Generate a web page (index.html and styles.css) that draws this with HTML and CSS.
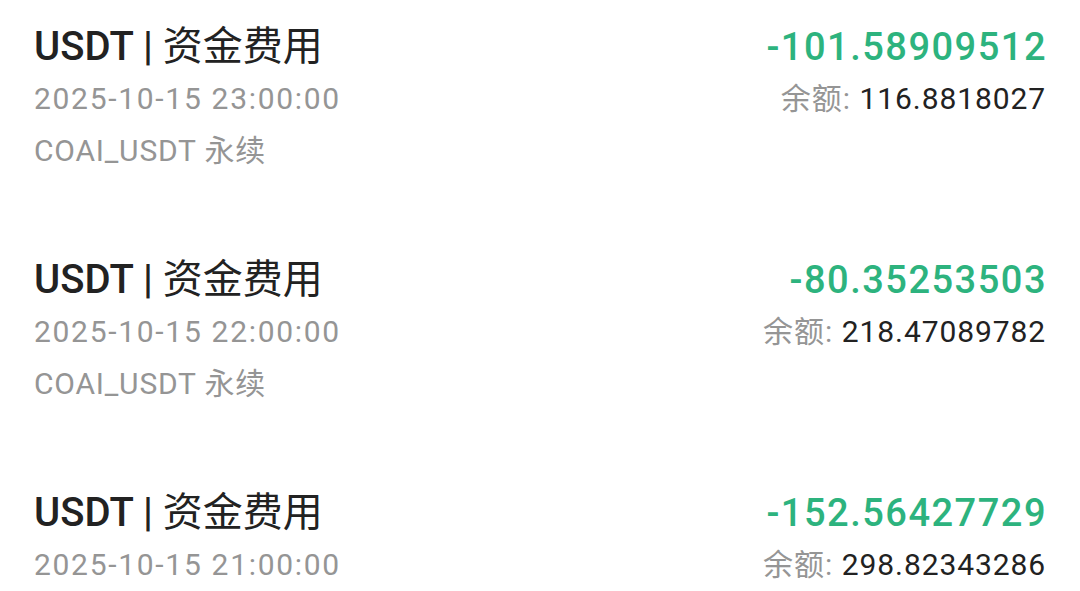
FILE: index.html
```html
<!DOCTYPE html>
<html lang="zh-CN">
<head>
<meta charset="utf-8">
<link rel="stylesheet" href="styles.css">
</head>
<body>
<div class="list">
  <div class="item">
    <div class="left">
      <div class="title"><span class="code">USDT |</span> 资金费用</div>
      <div class="sub date">2025-10-15 23:00:00</div>
      <div class="sub">COAI_USDT 永续</div>
    </div>
    <div class="right">
      <div class="amount">-101.58909512</div>
      <div class="balance"><span class="label">余额: </span><span class="num">116.8818027</span></div>
    </div>
  </div>
  <div class="item">
    <div class="left">
      <div class="title"><span class="code">USDT |</span> 资金费用</div>
      <div class="sub date">2025-10-15 22:00:00</div>
      <div class="sub">COAI_USDT 永续</div>
    </div>
    <div class="right">
      <div class="amount">-80.35253503</div>
      <div class="balance"><span class="label">余额: </span><span class="num">218.47089782</span></div>
    </div>
  </div>
  <div class="item last">
    <div class="left">
      <div class="title"><span class="code">USDT |</span> 资金费用</div>
      <div class="sub date">2025-10-15 21:00:00</div>
    </div>
    <div class="right">
      <div class="amount">-152.56427729</div>
      <div class="balance"><span class="label">余额: </span><span class="num">298.82343286</span></div>
    </div>
  </div>
</div>
</body>
</html>
```
FILE: styles.css
```css
html, body {
  margin: 0;
  padding: 0;
  background: #ffffff;
  height: 591px;
  overflow: hidden;
}
body {
  font-family: Roboto, "Noto Sans CJK SC", sans-serif;
}
.list {
  padding: 21px 34px 0 34px;
  display: flex;
  flex-direction: column;
}
.item {
  height: 233px;
  display: flex;
  justify-content: space-between;
  align-items: flex-start;
}
.item.last {
  height: auto;
}
.left, .right {
  display: flex;
  flex-direction: column;
}
.right {
  align-items: flex-end;
}
.title {
  font-size: 40px;
  line-height: 52px;
  font-weight: 400;
  color: #222222;
  white-space: nowrap;
}
.code {
  font-weight: 500;
}
.sub {
  font-size: 30px;
  line-height: 52px;
  color: #959595;
  letter-spacing: 0.8px;
  white-space: nowrap;
}
.date {
  letter-spacing: 1.7px;
}
.amount {
  font-size: 38px;
  line-height: 52px;
  font-weight: 500;
  color: #2db37e;
  letter-spacing: 1.5px;
  margin-right: -1px;
  white-space: nowrap;
}
.balance {
  font-size: 30px;
  line-height: 52px;
  color: #222222;
  white-space: nowrap;
}
.num {
  letter-spacing: 0.9px;
}
.label {
  color: #959595;
  letter-spacing: 1px;
}
```
